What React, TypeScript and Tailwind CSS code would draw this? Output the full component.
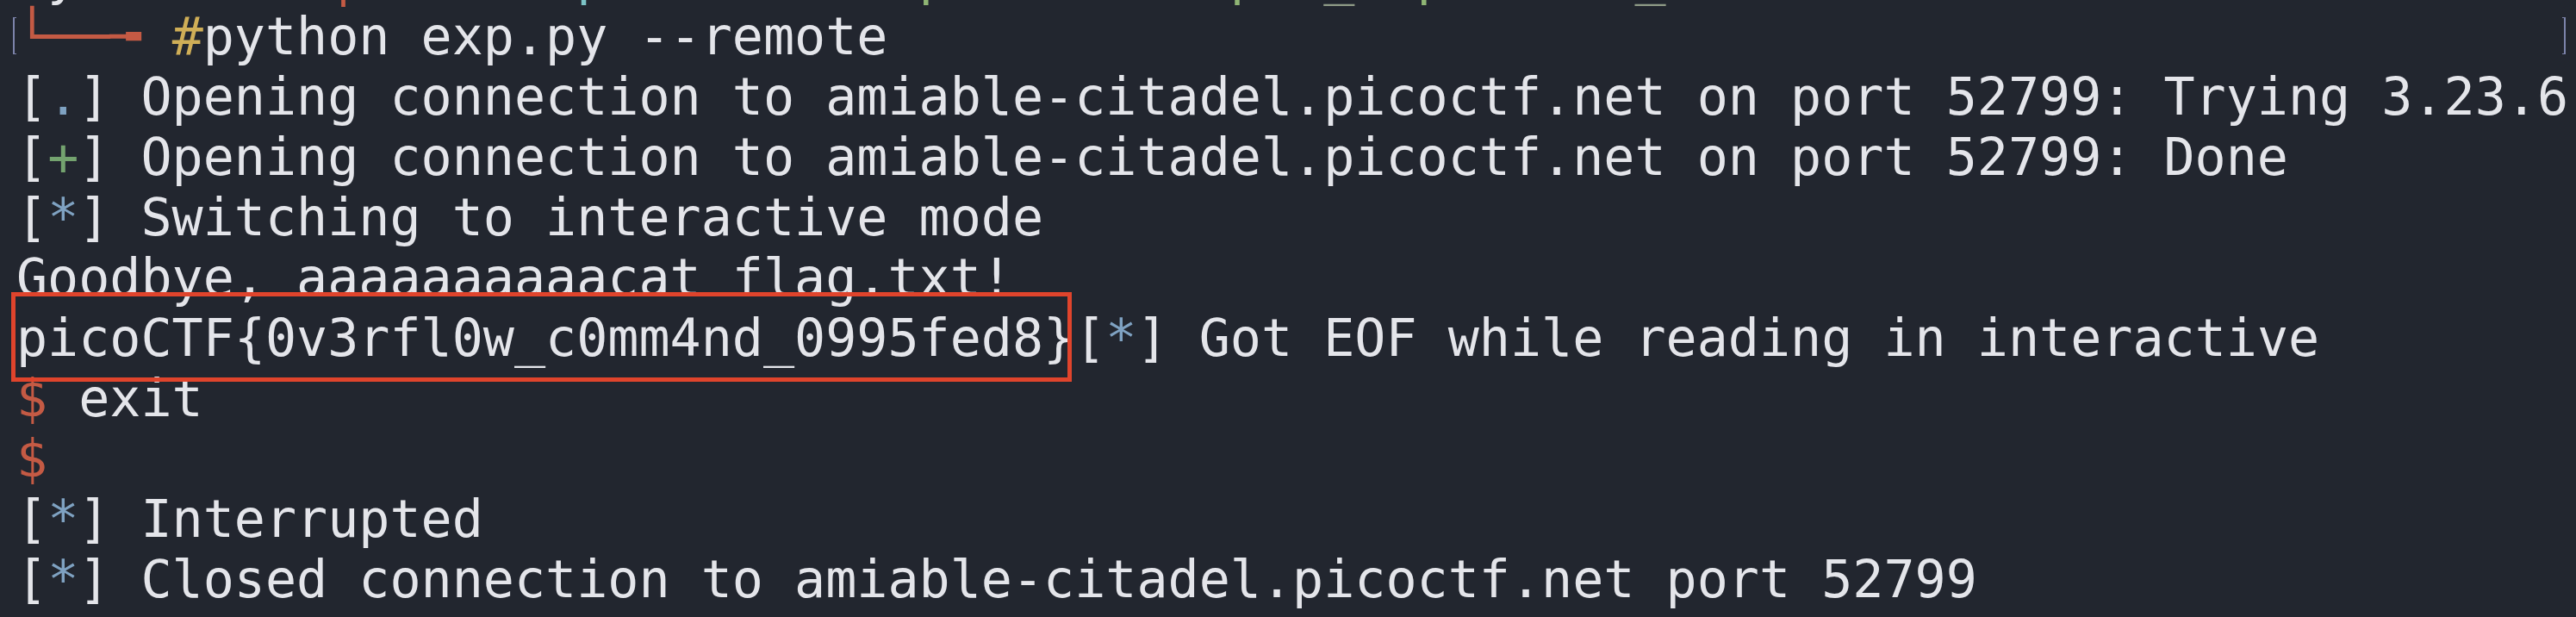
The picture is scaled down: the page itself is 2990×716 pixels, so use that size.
const red = 'text-[#c45a44]';
const gold = 'text-[#cfae57]';
const blue = 'text-[#7fa2c2]';
const green = 'text-[#74a36f]';
const cyan = 'text-[#7cc3c6]';
const lime = 'text-[#8fb574]';
const dim = 'text-[#8e9a86]';

function Tag({ mark, color }: { mark: string; color: string }) {
  return (
    <>
      [<span className={color}>{mark}</span>]
    </>
  );
}

export default function App() {
  return (
    <main className="w-full h-[716px] overflow-hidden bg-[#22262f]">
      <div className="-mt-[63px] pl-[19px] font-['DejaVu_Sans_Mono',monospace] text-[60px] leading-[70px] whitespace-pre text-[#e4e5ea]">
        {/* tail of the previous prompt line, cut off by the window top */}
        <div>
          {' y'}
          {'        '}
          <span className={red}>│</span>
          {'       '}
          <span className={cyan}>p</span>
          {'          '}
          <span className={lime}>p</span>
          {'         '}
          <span className={lime}>p</span>
          {'  '}
          <span className={dim}>_</span>
          {'  '}
          <span className={lime}>p</span>
          {'      '}
          <span className={dim}>_</span>
        </div>

        <div className="relative">
          <span className={red}>└──╼ </span>
          <span className={gold}>#</span>python exp.py --remote
          <span className="absolute left-[-4px] top-[13px] h-[43px] w-[4px] border-l-2 border-t border-b border-[#7c83aa]" />
          <span className="absolute right-[12px] top-[13px] h-[43px] w-[4px] border-r-2 border-t border-b border-[#7c83aa]" />
        </div>

        <div>
          <Tag mark="." color={blue} /> Opening connection to amiable-citadel.picoctf.net on port 52799: Trying 3.23.6
        </div>
        <div>
          <Tag mark="+" color={green} /> Opening connection to amiable-citadel.picoctf.net on port 52799: Done
        </div>
        <div>
          <Tag mark="*" color={blue} /> Switching to interactive mode
        </div>
        <div>Goodbye, aaaaaaaaaacat flag.txt!</div>

        <div className="relative">
          picoCTF{'{'}0v3rfl0w_c0mm4nd_0995fed8{'}'}
          <Tag mark="*" color={blue} /> Got EOF while reading in interactive
          {/* highlight around the flag */}
          <span className="absolute left-[-6px] top-[-18px] w-[1231px] h-[104px] border-[5px] border-[#e0442c]" />
        </div>

        <div>
          <span className={red}>$</span> exit
        </div>
        <div>
          <span className={red}>$</span>
        </div>
        <div>
          <Tag mark="*" color={blue} /> Interrupted
        </div>
        <div>
          <Tag mark="*" color={blue} /> Closed connection to amiable-citadel.picoctf.net port 52799
        </div>
        <div>{' '}</div>
      </div>
    </main>
  );
}
